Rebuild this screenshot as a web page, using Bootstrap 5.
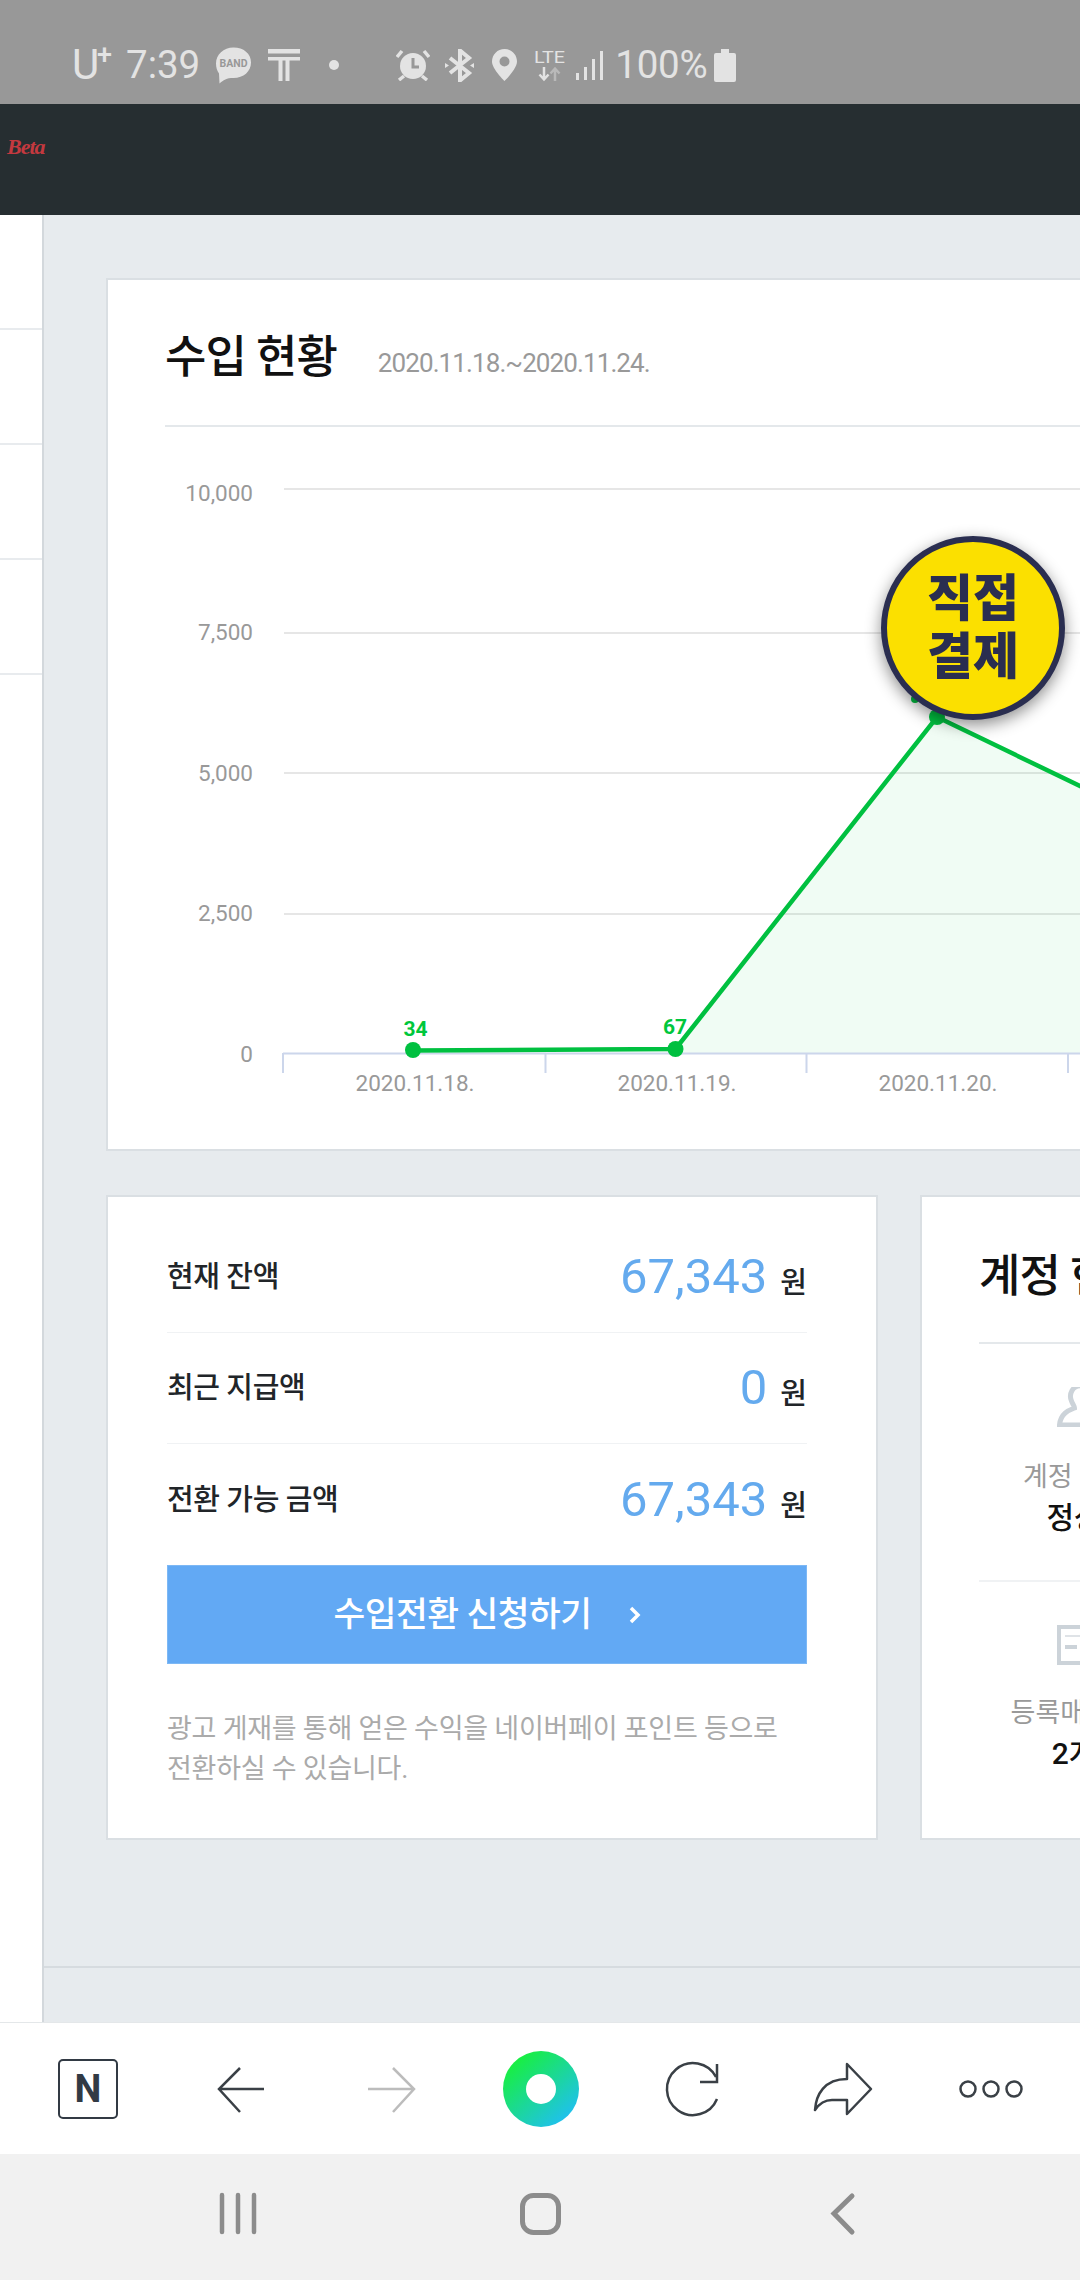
<!DOCTYPE html>
<html lang="ko">
<head>
    <meta charset="UTF-8">
    <meta name="viewport" content="width=device-width, initial-scale=1.0">
    <title>수입 현황</title>
    <link href="https://cdn.jsdelivr.net/npm/bootstrap@5.3.0/dist/css/bootstrap.min.css" rel="stylesheet">
    <style>
        html, body { margin: 0; width: 1080px; height: 2280px; overflow: hidden; }
        body { font-family: Roboto, "Noto Sans CJK KR", sans-serif; color: #111; background: #fff; }
        svg { display: block; flex-shrink: 0; }

        .status-strip { height: 104px; background: #989898; color: #e3e3e3; padding: 26px 0 0 72px; }
        .carrier { font-size: 42px; font-weight: 400; line-height: 1; width: 40px; position: relative; }
        .carrier sup { position: absolute; left: 25px; top: -2px; font-size: 27px; font-weight: 500; line-height: 1; }
        .clock { font-size: 38.5px; font-weight: 400; margin-left: 14px; line-height: 1; }
        .pct { font-size: 38.5px; font-weight: 400; margin-left: 12px; line-height: 1; letter-spacing: -.2px; }
        .ico-band { margin-left: 15px; }
        .ico-t { margin-left: 16px; }
        .ico-dot { margin-left: 29px; }
        .ico-alarm { margin-left: 57px; }
        .ico-bt { margin-left: 15px; }
        .ico-loc { margin-left: 18px; }
        .ico-lte { margin-left: 17px; }
        .ico-sig { margin-left: 11px; }
        .ico-bat { margin-left: 6px; }

        .top-head { height: 111px; background: #262e31; padding-bottom: 27px; }
        .beta-tag { font-family: "Liberation Serif", serif; font-style: italic; font-weight: 700; font-size: 22px; color: #c4393f; margin-left: 7px; letter-spacing: -1px; }

        .page-wrap { height: 1807px; overflow: hidden; }
        .side-col { width: 44px; flex: none; background: #fff; border-right: 2px solid #d3d8dc; padding-top: 113px; }
        .side-row { height: 115px; border-top: 2px solid #e8ebee; }
        .main-col { flex: 1; min-width: 0; background: #e7ebee; overflow: hidden; }
        .main-inner { width: 1587px; padding: 63px 0 0 62px; }
        .footer-line { margin: 126px 0 0 -62px; border-top: 2px solid #d6dbdf; width: 1100px; }

        .sheet { border: 2px solid #dadfe3; border-radius: 0; background: #fff; }
        .chart-sheet { height: 873px; }
        .chart-head { margin: 0 0 0 57px; height: 147px; border-bottom: 2px solid #e4e8eb; padding-top: 11px; }
        .sheet-title { font-size: 45px; font-weight: 500; line-height: 60px; margin: 0; letter-spacing: -1px; }
        .date-range { font-size: 26px; color: #999; letter-spacing: -.9px; margin-left: 41px; position: relative; top: 5px; }

        .axis-y { font-size: 22.5px; fill: #999; text-anchor: end; }
        .axis-x { font-size: 22.5px; fill: #999; text-anchor: middle; }
        .data-val { font-size: 21px; font-weight: 700; fill: #00c73c; text-anchor: middle; }

        .pay-badge { position: absolute; left: 837px; top: 321px; width: 184px; height: 184px; }
        .pay-disc { width: 184px; height: 184px; border-radius: 50%; background: #fbe000; border: 6px solid #2a2e50; box-shadow: 0 5px 16px rgba(0, 0, 0, .45); color: #2a2e50; font-size: 50px; font-weight: 900; line-height: 58px; }

        .sheet-pair { gap: 42px; margin-top: 44px; }
        .money-sheet, .acct-sheet { width: 772px; height: 645px; flex: none; }
        .money-body { padding: 25px 69px 0 59px; }
        .money-row { height: 111px; padding: 0; border-color: #f0f2f4; border-width: 0 0 2px; background: transparent; }
        .money-row:last-child { border-bottom: 0; }
        .money-label { font-size: 29px; font-weight: 500; letter-spacing: -.4px; position: relative; top: 1px; }
        .money-amt { position: relative; top: 2px; }
        .money-num { font-size: 49px; font-weight: 400; color: #64aaee; line-height: 1; }
        .money-unit { font-size: 29px; font-weight: 500; margin-left: 13px; }
        .go-btn { height: 99px; margin-top: 10px; background: #62a9f4; border: 1px solid #7db8f5; color: #fff; font-size: 34.5px; font-weight: 500; letter-spacing: -.5px; gap: 37px; }
        .go-btn:hover { background: #62a9f4; color: #fff; }
        .money-note { font-size: 27px; line-height: 40px; color: #aaa; margin: 45px 0 0; letter-spacing: -.25px; }

        .acct-head { margin-left: 57px; height: 147px; border-bottom: 2px solid #e4e8eb; padding-top: 50px; }
        .acct-label { font-size: 27px; color: #999; white-space: nowrap; line-height: 38px; padding-right: 8px; }
        .acct-val { font-size: 30px; font-weight: 500; white-space: nowrap; line-height: 44px; padding-right: 12px; }
        .acct-a { height: 238px; border-bottom: 2px solid #f0f2f4; padding-top: 43px; width: 700px; margin-left: 57px; }
        .acct-b { padding-top: 43px; width: 700px; margin-left: 57px; }
        .acct-inner { width: 202px; }
        .acct-gap { margin-top: 29px; }
        .acct-a .acct-gap { margin-top: 31px; }

        .tool-strip, .nav-strip { position: relative; }
        .tool-strip { height: 132px; background: #fff; border-top: 1px solid #e4e7e9; }
        .nav-strip { height: 126px; background: #f1f1f1; }
        .free-ico { position: absolute; left: 0; top: 0; }
        .tool-n { position: absolute; left: 58px; top: 36px; width: 60px; height: 60px; border: 2.5px solid #323a44; border-radius: 5px; color: #323a44; font-size: 38px; font-weight: 700; line-height: 1; }
    </style>
</head>
<body>
    <div class="status-strip d-flex align-items-center">
        <span class="carrier">U<sup>+</sup></span>
        <span class="clock">7:39</span>
        <span class="ico-band position-relative">
            <svg width="37" height="37" viewBox="0 0 37 37"><path d="M18.5 0.5C8.5 0.5 1 7.5 1 16.5c0 4 1 7 3 10l.5 10c4-3.5 7-5.5 14-5.5 10 0 17.5-6.5 17.500-15.500S28.500.5 18.500.5z" fill="#e3e3e3"/><text x="18.500" y="20" text-anchor="middle" font-size="10.500" font-weight="700" fill="#989898" font-family="Roboto">BAND</text></svg>
        </span>
        <svg class="ico-t" width="32" height="32" viewBox="0 0 32 32"><path d="M0 0h32v4.500H0zM0 8h32v3.500H21.500V32h-4V11.500h-3V32h-4V11.500H0z" fill="#e3e3e3"/></svg>
        <svg class="ico-dot" width="10" height="10" viewBox="0 0 10 10"><circle cx="5" cy="5" r="5" fill="#e3e3e3"/></svg>
        <svg class="ico-alarm" width="34" height="32" viewBox="0 0 34 32"><circle cx="17" cy="17" r="13" fill="#e3e3e3"/><path d="M17 9v9h6" fill="none" stroke="#989898" stroke-width="3"/><path d="M1 8l5-6M33 8l-5-6M3 31l5-4M31 31l-5-4" stroke="#e3e3e3" stroke-width="3.500"/></svg>
        <svg class="ico-bt" width="29" height="33" viewBox="0 0 29 33"><path d="M5 9l19 15-9 7.500V1.500l9 7.500L5 24" fill="none" stroke="#e3e3e3" stroke-width="4"/><path d="M0 14l4 2.500-4 2.500zM29 14l-4 2.500 4 2.500z" fill="#e3e3e3"/></svg>
        <svg class="ico-loc" width="25" height="32" viewBox="0 0 25 32"><path fill-rule="evenodd" d="M12.500 0C5.500 0 0 5.500 0 12.500 0 20 12.500 32 12.500 32S25 20 25 12.500C25 5.500 19.500 0 12.500 0zm0 7.500a5 5 0 1 1 0 10 5 5 0 0 1 0-10z" fill="#e3e3e3"/></svg>
        <span class="ico-lte d-block">
            <svg width="31" height="33" viewBox="0 0 31 33"><text x="15.500" y="14" text-anchor="middle" font-size="17" font-family="Roboto" fill="#e3e3e3" textLength="31" lengthAdjust="spacingAndGlyphs">LTE</text><path d="M10 18v12M5.500 25.500l4.500 5 4.500-5" fill="none" stroke="#e3e3e3" stroke-width="2.500"/><path d="M21 32V20M16.500 24.500l4.500-5 4.500 5" fill="none" stroke="#b9b9b9" stroke-width="2.500"/></svg>
        </span>
        <svg class="ico-sig" width="27" height="31" viewBox="0 0 27 31"><path d="M1.500 30v-7M9.500 30V17M17.500 30V9M25.500 30V1" stroke="#e3e3e3" stroke-width="3" fill="none"/></svg>
        <span class="pct">100%</span>
        <svg class="ico-bat" width="22" height="33" viewBox="0 0 22 33"><path d="M7 0h8v4h5a2 2 0 0 1 2 2v25a2 2 0 0 1-2 2H2a2 2 0 0 1-2-2V6a2 2 0 0 1 2-2h5z" fill="#e3e3e3"/></svg>
    </div>

    <div class="top-head d-flex align-items-center">
        <span class="beta-tag">Beta</span>
    </div>

    <div class="page-wrap d-flex">
        <div class="side-col">
            <div class="side-row"></div>
            <div class="side-row"></div>
            <div class="side-row"></div>
            <div class="side-row"></div>
        </div>

        <div class="main-col">
            <div class="main-inner position-relative">
                <div class="card sheet chart-sheet">
                    <div class="chart-head d-flex align-items-center">
                        <h2 class="sheet-title">수입 현황</h2>
                        <span class="date-range">2020.11.18.~2020.11.24.</span>
                    </div>
                    <svg width="1500" height="700" viewBox="108 427 1500 700">
                        <path d="M284 489H1600M284 633H1600M284 773H1600M284 914H1600" stroke="#e6e6e6" stroke-width="2" fill="none"/>
                        <path d="M675.500 1049L937 717L1200 844L1462 900V1053H675.500Z" fill="#00c73c" fill-opacity=".06"/>
                        <path d="M283 1053.500H1600M283 1053v20M545.500 1053v20M806.500 1053v20M1068 1053v20" stroke="#ccd6eb" stroke-width="2" fill="none"/>
                        <text class="axis-y" x="253" y="501">10,000</text>
                        <text class="axis-y" x="253" y="640">7,500</text>
                        <text class="axis-y" x="253" y="781">5,000</text>
                        <text class="axis-y" x="253" y="921">2,500</text>
                        <text class="axis-y" x="253" y="1062">0</text>
                        <text class="axis-x" x="415" y="1091">2020.11.18.</text>
                        <text class="axis-x" x="677" y="1091">2020.11.19.</text>
                        <text class="axis-x" x="938" y="1091">2020.11.20.</text>
                        <path d="M413 1050.500L675.500 1049L937 717L1200 844L1462 900" stroke="#00c040" stroke-width="4.500" fill="none"/>
                        <circle cx="413" cy="1050" r="8" fill="#00c040"/>
                        <circle cx="675.500" cy="1049" r="8" fill="#00c040"/>
                        <circle cx="937" cy="717" r="8" fill="#00c040"/>
                        <circle cx="915" cy="699" r="4" fill="#00c040"/>
                        <text class="data-val" x="415.500" y="1036">34</text>
                        <text class="data-val" x="675" y="1034">67</text>
                    </svg>
                </div>

                <div class="pay-badge">
                    <div class="pay-disc d-flex align-items-center justify-content-center text-center">직접<br>결제</div>
                </div>

                <div class="d-flex sheet-pair">
                    <div class="card sheet money-sheet">
                        <div class="money-body">
                            <ul class="list-group list-group-flush">
                                <li class="list-group-item money-row d-flex justify-content-between align-items-center">
                                    <span class="money-label">현재 잔액</span>
                                    <span class="money-amt d-flex align-items-baseline"><span class="money-num">67,343</span><span class="money-unit">원</span></span>
                                </li>
                                <li class="list-group-item money-row d-flex justify-content-between align-items-center">
                                    <span class="money-label">최근 지급액</span>
                                    <span class="money-amt d-flex align-items-baseline"><span class="money-num">0</span><span class="money-unit">원</span></span>
                                </li>
                                <li class="list-group-item money-row d-flex justify-content-between align-items-center">
                                    <span class="money-label">전환 가능 금액</span>
                                    <span class="money-amt d-flex align-items-baseline"><span class="money-num">67,343</span><span class="money-unit">원</span></span>
                                </li>
                            </ul>
                            <button type="button" class="btn go-btn w-100 rounded-0 d-flex align-items-center justify-content-center">
                                수입전환 신청하기
                                <svg width="12" height="18" viewBox="0 0 12 18"><path d="M2 2l7 7-7 7" fill="none" stroke="#fff" stroke-width="3.500"/></svg>
                            </button>
                            <p class="money-note">광고 게재를 통해 얻은 수익을 네이버페이 포인트 등으로<br>전환하실 수 있습니다.</p>
                        </div>
                    </div>

                    <div class="card sheet acct-sheet">
                        <div class="acct-head">
                            <h2 class="sheet-title">계정 현황</h2>
                        </div>
                        <div class="acct-a">
                            <div class="acct-inner text-center">
                                <svg class="mx-auto" width="46" height="40" viewBox="0 0 46 40"><path d="M14.500 14a9.500 10.500 0 1 1 17 0c-1 3-3 5-3 7 5 2 14 5 15 17H2.500c1-12 10-15 15-17 0-2-2-4-3-7z" fill="none" stroke="#ccd3d9" stroke-width="5"/></svg>
                                <div class="acct-label acct-gap">계정 상태</div>
                                <div class="acct-val">정상</div>
                            </div>
                        </div>
                        <div class="acct-b">
                            <div class="acct-inner text-center">
                                <svg class="mx-auto" width="46" height="40" viewBox="0 0 46 40"><path d="M2 2h42v36H2z" fill="none" stroke="#ccd3d9" stroke-width="4"/><path d="M8 11h30" stroke="#dfe3e7" stroke-width="2"/><path d="M8 22h12" stroke="#ccd3d9" stroke-width="4"/></svg>
                                <div class="acct-label acct-gap">등록매체 수</div>
                                <div class="acct-val">2개</div>
                            </div>
                        </div>
                    </div>
                </div>

                <div class="footer-line"></div>
            </div>
        </div>
    </div>

    <div class="tool-strip">
        <div class="tool-n d-flex align-items-center justify-content-center">N</div>
        <svg class="free-ico" width="1080" height="132" viewBox="0 2022 1080 132">
            <defs>
                <linearGradient id="dotGrad" x1="0.15" y1="0.1" x2="0.85" y2="0.9">
                    <stop offset="0" stop-color="#18f03c"/>
                    <stop offset="1" stop-color="#1fc0f0"/>
                </linearGradient>
            </defs>
            <path d="M264 2088H220M240 2067L219 2088L240 2111" fill="none" stroke="#3a4046" stroke-width="2.500"/>
            <path d="M368 2088H413M393 2067L414 2088L393 2111" fill="none" stroke="#bcbcbc" stroke-width="2.500"/>
            <circle cx="541" cy="2088" r="38" fill="url(#dotGrad)"/>
            <circle cx="541" cy="2088" r="15" fill="#fff"/>
            <path d="M716 2076A26 26 0 1 0 717 2098M717 2063V2081H700" fill="none" stroke="#3a4046" stroke-width="2.500"/>
            <path d="M847 2063L871 2088L847 2113V2099H832C825 2099 819 2103 815 2109C816 2094 824 2078 847 2078Z" fill="none" stroke="#3a4046" stroke-width="2.500" stroke-linejoin="round"/>
            <circle cx="968" cy="2088" r="7.500" fill="none" stroke="#3a4046" stroke-width="2.500"/>
            <circle cx="991" cy="2088" r="7.500" fill="none" stroke="#3a4046" stroke-width="2.500"/>
            <circle cx="1014" cy="2088" r="7.500" fill="none" stroke="#3a4046" stroke-width="2.500"/>
        </svg>
    </div>
    <div class="nav-strip">
        <svg class="free-ico" width="1080" height="126" viewBox="0 2154 1080 126">
            <path d="M222 2195V2232M238 2195V2232M254 2195V2232" stroke="#8c8c8c" stroke-width="4.500" stroke-linecap="round" fill="none"/>
            <rect x="522.500" y="2195.500" width="36" height="37" rx="11" fill="none" stroke="#8c8c8c" stroke-width="5"/>
            <path d="M852 2196L834 2213.500L852 2232" fill="none" stroke="#8c8c8c" stroke-width="5" stroke-linecap="round"/>
        </svg>
    </div>

    <script src="https://cdn.jsdelivr.net/npm/bootstrap@5.3.0/dist/js/bootstrap.bundle.min.js"></script>
</body>
</html>
